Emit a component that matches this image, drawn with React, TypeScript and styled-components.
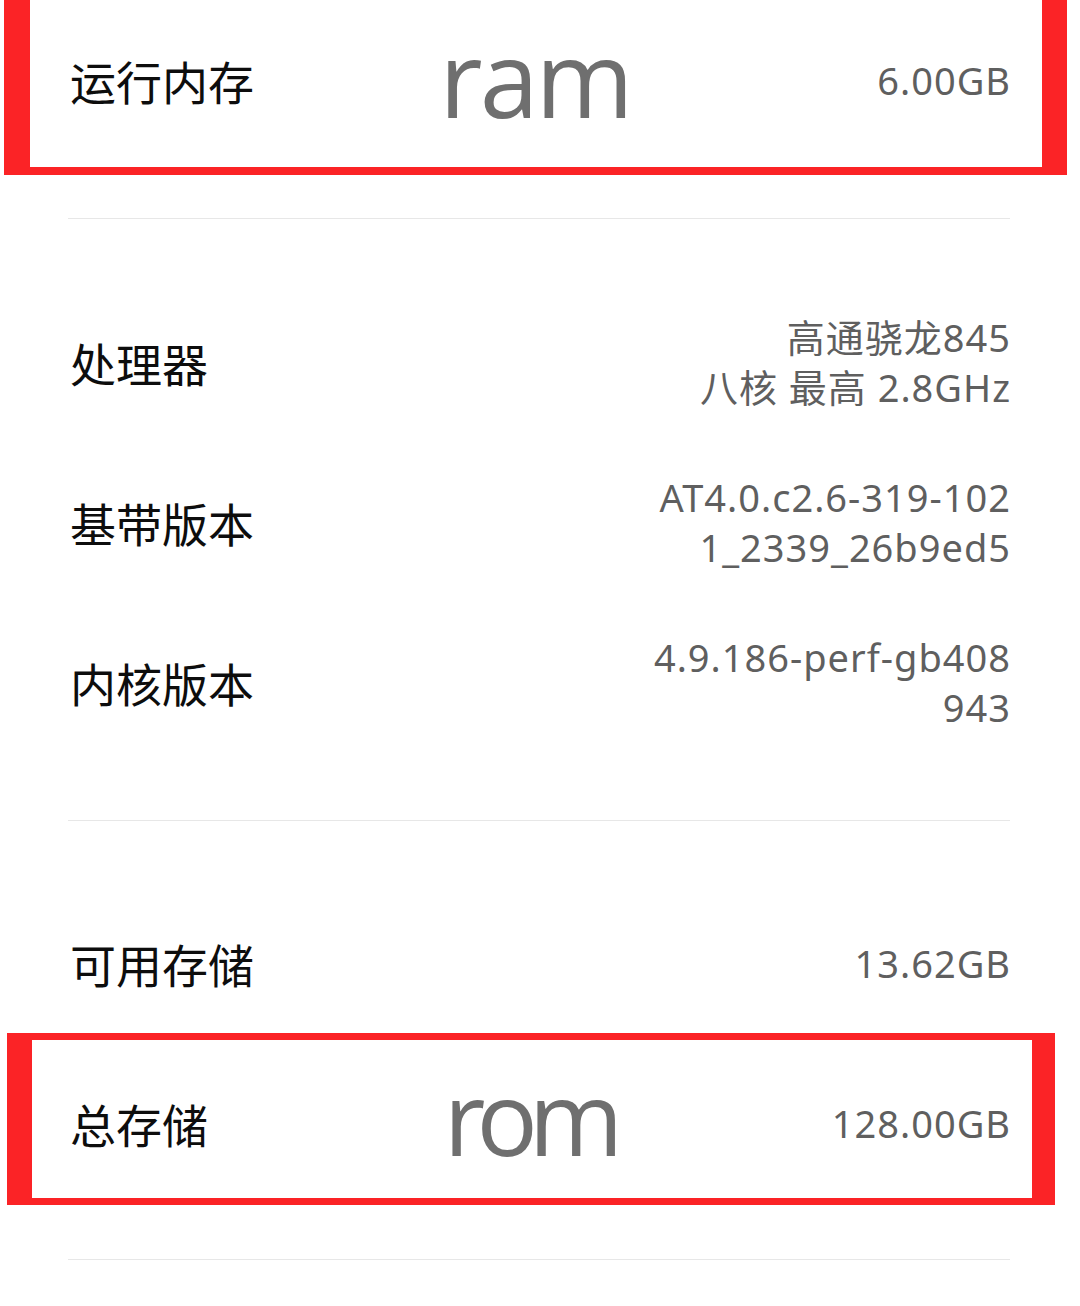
import React from 'react';
import styled, { createGlobalStyle } from 'styled-components';

const GlobalStyle = createGlobalStyle`
    html, body {
        margin: 0;
        padding: 0;
        background: #ffffff;
    }

    body {
        font-family: 'Noto Sans', 'Noto Sans CJK SC', sans-serif;
    }
`;

const Screen = styled.main`
    width: 1080px;
    min-height: 1306px;
    background: #ffffff;
    overflow: hidden;
`;

const Group = styled.section<{ $flushTop?: boolean; $padTop?: number; $padBottom?: number }>`
    margin: 0 70px 0 68px;
    padding-top: ${(p) => (p.$flushTop ? 0 : p.$padTop ?? 63)}px;
    padding-bottom: ${(p) => p.$padBottom ?? 58}px;
    border-bottom: 1px solid #e7e7e7;
`;

const Row = styled.div`
    position: relative;
    height: 160px;
    display: grid;
    grid-template-columns: 1fr auto 1fr;
    align-items: center;
`;

const Label = styled.span`
    font-family: 'Noto Sans CJK SC', 'Noto Sans', sans-serif;
    font-size: 46px;
    color: #0d0d0d;
    line-height: 1;
    white-space: nowrap;
    padding-left: 2px;
`;

const Value = styled.div`
    justify-self: end;
    text-align: right;
    font-family: 'Noto Sans', 'Noto Sans CJK SC', sans-serif;
    font-size: 38px;
    letter-spacing: 1px;
    line-height: 50px;
    color: #5f5f5f;
    white-space: nowrap;
    margin-right: -1px;

    span {
        display: block;
    }
`;

// big hand-written tag in the middle of a highlighted row
const Tag = styled.span<{ $size: number; $tracking: number; $shift: number; $nudge: number }>`
    font-family: 'Open Sans', 'Noto Sans', sans-serif;
    font-size: ${(p) => p.$size}px;
    line-height: 1;
    color: #6f6f6f;
    letter-spacing: ${(p) => p.$tracking}px;
    margin-top: ${(p) => p.$shift}px;
    margin-right: ${(p) => p.$nudge}px;
`;

type Box = { top: number; right: number; bottom: number; left: number };

// red marker frame drawn over a row
const Frame = styled.div<{ $inset: Box; $widths: Box }>`
    position: absolute;
    top: ${(p) => p.$inset.top}px;
    right: ${(p) => p.$inset.right}px;
    bottom: ${(p) => p.$inset.bottom}px;
    left: ${(p) => p.$inset.left}px;
    border-style: solid;
    border-color: #fb2326;
    border-width: ${(p) => `${p.$widths.top}px ${p.$widths.right}px ${p.$widths.bottom}px ${p.$widths.left}px`};
    pointer-events: none;
`;

type TagSpec = { text: string; size: number; tracking: number; shift: number; nudge: number };

type InfoRowProps = {
    label: string;
    lines: string[];
    tag?: TagSpec;
    frame?: { inset: Box; widths: Box };
};

const InfoRow: React.FC<InfoRowProps> = ({ label, lines, tag, frame }) => (
    <Row>
        <Label>{label}</Label>
        {tag ? (
            <Tag $size={tag.size} $tracking={tag.tracking} $shift={tag.shift} $nudge={tag.nudge}>
                {tag.text}
            </Tag>
        ) : (
            <span />
        )}
        <Value>
            {lines.map((line) => (
                <span key={line}>{line}</span>
            ))}
        </Value>
        {frame && <Frame $inset={frame.inset} $widths={frame.widths} />}
    </Row>
);

export default function App() {
    return (
        <>
            <GlobalStyle />
            <Screen>
                <Group $flushTop>
                    <InfoRow
                        label="运行内存"
                        lines={['6.00GB']}
                        tag={{ text: 'ram', size: 106, tracking: -3, shift: -6, nudge: 8 }}
                        frame={{
                            inset: { top: -40, right: -57, bottom: -15, left: -64 },
                            widths: { top: 8, right: 25, bottom: 8, left: 26 },
                        }}
                    />
                </Group>
                <Group>
                    <InfoRow label="处理器" lines={['高通骁龙845', '八核 最高 2.8GHz']} />
                    <InfoRow label="基带版本" lines={['AT4.0.c2.6-319-102', '1_2339_26b9ed5']} />
                    <InfoRow label="内核版本" lines={['4.9.186-perf-gb408', '943']} />
                </Group>
                <Group $padTop={62} $padBottom={56}>
                    <InfoRow label="可用存储" lines={['13.62GB']} />
                    <InfoRow
                        label="总存储"
                        lines={['128.00GB']}
                        tag={{ text: 'rom', size: 102, tracking: -9, shift: -12, nudge: 20 }}
                        frame={{
                            inset: { top: -10, right: -45, bottom: -2, left: -61 },
                            widths: { top: 7, right: 23, bottom: 7, left: 25 },
                        }}
                    />
                </Group>
            </Screen>
        </>
    );
}
